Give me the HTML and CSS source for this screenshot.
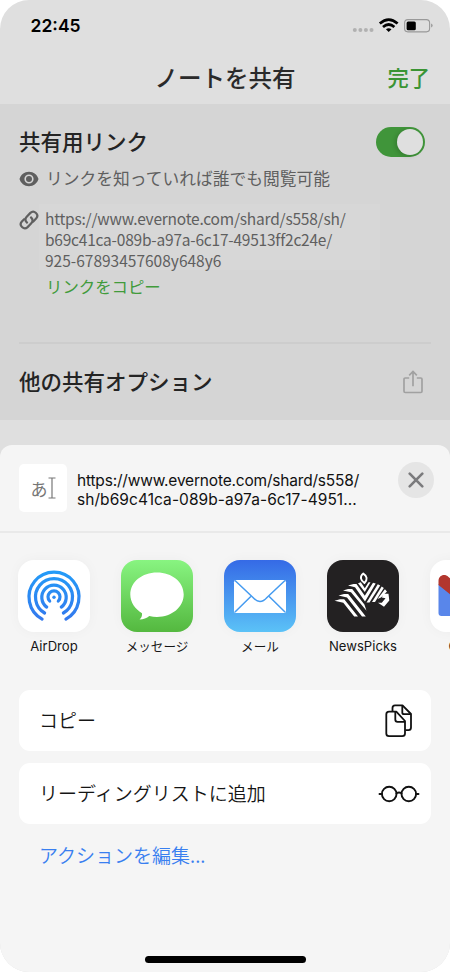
FILE: index.html
```html
<!DOCTYPE html>
<html lang="ja">
<head>
<meta charset="utf-8">
<title>ノートを共有</title>
<link rel="stylesheet" href="styles.css">
</head>
<body>
<div class="phone">
  <div class="status">
    <span class="time">22:45</span>
    <svg class="status-icons" width="82" height="20" viewBox="0 0 82 20">
      <g fill="#b1b1b1"><circle cx="3.8" cy="14" r="2"/><circle cx="9.4" cy="14" r="2"/><circle cx="14.9" cy="14" r="2"/><circle cx="20.5" cy="14" r="2"/></g>
      <g fill="none" stroke="#000" stroke-width="2.7"><path d="M28.800 7.500Q37.700-.3 46.600 7.500"/><path d="M32 11Q37.700 6 43.400 11"/></g>
      <path d="M34.900 13.300Q37.700 11 40.500 13.300L37.700 16z"/>
      <rect x="53.600" y="3.6" width="25" height="12.3" rx="3.3" fill="none" stroke="#999" stroke-width="1.1"/>
      <rect x="55.600" y="5.5" width="9.2" height="8.7" rx="1.5"/>
      <path d="M80.100 7.600q1.500.6 1.500 2t-1.500 2z" fill="#999"/>
    </svg>
  </div>
  <header class="nav"><h1>ノートを共有</h1><span class="done">完了</span></header>
  <main class="panel">
    <div class="row link-title"><h2>共有用リンク</h2><span class="toggle"><i></i></span></div>
    <div class="row viewers">
      <svg width="20" height="16" viewBox="0 0 20 16"><path fill="#5f5f5f" fill-rule="evenodd" d="M10 .8C5.300.8 1.800 3.800.5 8 1.800 12.200 5.300 15.200 10 15.200S18.200 12.200 19.500 8C18.200 3.800 14.700.8 10 .8zM10 3.400A4.600 4.600 0 1 1 10 12.600 4.600 4.600 0 0 1 10 3.400z"/><circle cx="10" cy="8" r="3" fill="#5f5f5f"/></svg>
      <span>リンクを知っていれば誰でも閲覧可能</span>
    </div>
    <div class="link">
      <svg class="chain" width="20" height="20" viewBox="0 0 20 20" fill="none" stroke="#606060" stroke-width="2.200" stroke-linecap="round"><path d="M8 12.600C5.900 10.600 6.300 8.200 7.700 6.700L11.400 2.900C15-.6 20.700 4.600 17.100 8.600L14.300 11.500"/><path d="M12 7.400C14.100 9.400 13.700 11.800 12.300 13.300L8.600 17.100C5 20.600-.7 15.400 2.900 11.400L5.100 9.200"/></svg>
      <p class="url"><span class="l1">https://www.evernote.com/shard/s558/sh/</span><span class="l2">b69c41ca-089b-a97a-6c17-49513ff2c24e/</span><span class="l3">925-67893457608y648y6</span></p>
    </div>
    <div class="copy-link">リンクをコピー</div>
    <div class="row other"><h2>他の共有オプション</h2>
      <svg width="20" height="24" viewBox="0 0 20 24" fill="none" stroke="#a1a1a1" stroke-width="1.700"><path d="M6.200 8H2.200Q1 8 1 9.200V21.300Q1 22.500 2.200 22.500H17.800Q19 22.500 19 21.300V9.200Q19 8 17.800 8H13.800M10 16.300V1.900M6.200 5.300L10 1.500L13.800 5.300"/></svg>
    </div>
  </main>
  <section class="sheet">
    <div class="sheet-head">
      <div class="thumb"><span>あ</span><svg width="8" height="22" viewBox="0 0 8 22" fill="none" stroke="#777" stroke-width="1.200"><path d="M.5 1H7.500M4 1V21M.5 21H7.500"/></svg></div>
      <p class="preview"><span class="p1">https://www.evernote.com/shard/s558/</span><span class="p2">sh/b69c41ca-089b-a97a-6c17-4951...</span></p>
      <div class="close"><svg width="16" height="16" viewBox="0 0 16 16"><path d="M1.700 1.700L14.300 14.300M14.300 1.700L1.700 14.300" stroke="#7b7b7d" stroke-width="2.600" stroke-linecap="round"/></svg></div>
    </div>
    <div class="apps">
      <div class="app"><div class="tile white">
        <svg viewBox="0 0 72 72"><defs><linearGradient id="air" gradientUnits="userSpaceOnUse" x1="0" y1="10" x2="0" y2="61"><stop offset="0" stop-color="#239cf8"/><stop offset="1" stop-color="#3478ed"/></linearGradient></defs>
        <g fill="none" stroke="url(#air)" stroke-width="3.200" stroke-linecap="round"><path d="M24.100 59.100A25 25 0 1 1 47.900 59.100"/><path d="M26.600 53A18.500 18.500 0 1 1 45.400 53"/><path d="M28.700 47.100A12.200 12.200 0 1 1 43.300 47.100"/><path d="M31.700 41A6 6 0 1 1 40.300 41"/></g><circle cx="36" cy="37.300" r="1.700" fill="#2b8cf4"/></svg>
      </div><span class="air-label">AirDrop</span></div>
      <div class="app"><div class="tile green"><svg viewBox="0 0 72 72"><path fill="#fff" d="M36 12.500C21 12.500 9.300 22 9.300 34.500C9.300 42.200 14 49 21 53.200C21.300 56 20.200 58 18.600 59.600C22.500 59.500 25.700 58 28.300 56C31 56.600 33.400 56.900 36 56.900C51 56.900 62.700 47 62.700 34.500S51 12.500 36 12.500z"/></svg></div><span>メッセージ</span></div>
      <div class="app"><div class="tile blue"><svg viewBox="0 0 72 72"><rect x="10" y="20" width="52" height="33" rx="2.300" fill="#fff"/><g fill="none" stroke="#459bf0" stroke-width="1.500"><path d="M11 20.500L29 37.500Q36 45.500 43 37.500L61 20.500M11 52L26.800 36.500M61 52L45.200 36.500"/></g></svg></div><span>メール</span></div>
      <div class="app"><div class="tile black"><svg viewBox="0 0 72 72">
        <g fill="#fff">
          <path d="M7.500 40.800L13 39.200H17.200L31 56.600H27.200L16.300 42.800z"/>
          <path d="M11.500 35.600L17 34H21.200L38.800 56.600H35L20 37.400z"/>
          <path d="M16 30.500L21 28.900H25.200L37.400 44.500L39.500 50.800L24 32.200z"/>
          <path d="M21 25.500L26.500 23.900H29.500L37.800 35.800L46 22.800L48.700 23.600L38 41.600L28 27.300z"/>
          <path d="M31 23.200L33.800 22.200L37.800 28.200L41.500 22.200H43.500L37.800 32z"/>
          <path d="M39.500 42.500L50.800 24.200L53.200 25.400L42.500 42.500z"/>
          <path d="M45 42L54.700 26.600L56.800 28.100L48 42z"/>
          <path d="M50.500 39L57.900 29.200L60 31.400L54 37.500z"/>
          <path d="M56.500 33.800H61.500L62.300 40.500L57 46.800L51 42.700L54.800 42.800L58.500 38.300L54.800 37.400z"/>
        </g>
        <path d="M36.300 13.600C32.500 16.500 33.500 20.500 37.400 23C41 19.500 40 16 36.300 13.600z" fill="#232122" stroke="#fff" stroke-width="1.900"/>
      </svg></div><span class="news-label">NewsPicks</span></div>
      <div class="app"><div class="tile white"><svg viewBox="0 0 72 72"><path d="M8.500 24V53Q8.500 56 11.500 56H21V33z" fill="#5986ea"/><path d="M8.500 25V21C8.500 15.500 14.500 13 18.500 17L36 33L53.500 17Q62 12 63.500 21V25L36 47z" fill="#b2362e"/></svg></div><span class="news-label">Gmail</span></div>
    </div>
    <div class="actions">
      <div class="action"><span>コピー</span><svg width="28" height="34" viewBox="0 0 28 34" fill="none" stroke="#111" stroke-width="1.800" stroke-linejoin="round"><path d="M7.500 7V4Q7.500 1.300 10 1.300H17.500L26 10V23.500Q26 26.200 23.500 26.200H20.500"/><path d="M17.300 1.300V8.500Q17.300 10.200 19 10.200H26"/><path d="M4 7.700H11.300L20 17V29.500Q20 32.200 17.300 32.200H4Q1.300 32.200 1.300 29.500V10.400Q1.300 7.700 4 7.700z"/><path d="M10.300 8V15.500Q10.300 17.800 12.500 17.800H20"/></svg></div>
      <div class="action"><span>リーディングリストに追加</span><svg class="glasses" width="42" height="18" viewBox="0 0 42 18" fill="none" stroke="#111" stroke-width="1.900"><circle cx="11.200" cy="9" r="7.300"/><circle cx="30.800" cy="9" r="7.300"/><path d="M1.500 9H4M38 9H40.500M18.400 8.300Q21 6.700 23.600 8.300" stroke-linecap="round"/></svg></div>
      <div class="edit">アクションを編集...</div>
    </div>
    <div class="home"></div>
  </section>
</div>
</body>
</html>
```
FILE: styles.css
```css
* { box-sizing: border-box; }
body { margin: 0; background: #fff; font-family: "Noto Sans CJK JP", sans-serif; }
h1, h2 { margin: 0; font-weight: 500; }
p { margin: 0; }
svg { display: block; flex: none; }
.phone { width: 450px; height: 972px; overflow: hidden; border-radius: 29px; background: #dfdfdf; display: flex; flex-direction: column; white-space: nowrap; }
.status { height: 52px; padding: 0 17px 0 30.5px; display: flex; justify-content: space-between; align-items: center; flex: none; }
.time { font: 600 17.5px/20px Inter, sans-serif; }
.nav { height: 52px; flex: none; display: grid; grid-template-columns: 1fr auto 1fr; align-items: center; padding: 0 20px 2px; line-height: 50px; }
.nav h1 { grid-column: 2; font-size: 23.5px; font-weight: 500; color: #2a2a2a; }
.done { justify-self: end; font-size: 21.3px; font-weight: 500; color: #3a9434; }
.panel { height: 316px; flex: none; background: #d5d5d5; padding: 22px 19px 0; color: #5f5f5f; }
.row { display: flex; align-items: center; }
.row h2 { font-size: 21.5px; line-height: 28px; padding-bottom: 1px; color: #242424; }
.link-title { justify-content: space-between; height: 31px; padding-right: 6px; }
.toggle { width: 49px; height: 30px; border-radius: 15px; background: #40953a; padding: 2px; display: flex; justify-content: flex-end; }
.toggle i { width: 26px; height: 26px; border-radius: 50%; background: #dfdfdf; box-shadow: -2px 1px 4px rgba(0,0,0,.16); }
.viewers { gap: 7px; height: 28px; margin-top: 8px; font-size: 16.75px; }
.viewers span { padding-bottom: 3px; }
.link { display: flex; margin-top: 11px; height: 66px; }
.chain { margin-top: 6px; }
.url { width: 341px; background: #d7d7d7; padding: 4px 0 0 6px; font-size: 15.5px; line-height: 21px; }
.url span, .preview span { display: block; }
.l1 { letter-spacing: -.22px; }
.l2 { letter-spacing: -.22px; }
.copy-link { margin-left: 27px; height: 73px; line-height: 32px; font-size: 16.4px; color: #419b3b; }
.other { border-top: 2px solid #cdcdcd; height: 77px; justify-content: space-between; padding-right: 8px; margin-top: -1px; }
.sheet { margin-top: 25px; flex: 1; background: #f5f5f5; border-radius: 12px 12px 0 0; display: flex; flex-direction: column; overflow: hidden; }
.sheet-head { height: 88px; flex: none; border-bottom: 2px solid #e9e9e9; padding: 19px 16px 0 19px; display: flex; }
.thumb { width: 48px; height: 48px; background: #fff; border-radius: 5px; display: flex; align-items: center; justify-content: center; color: #777; font-size: 17px; }
.preview { margin: 7px 0 0 10px; width: 290px; font: 400 15.5px/19px Inter, sans-serif; color: #111; }
.p1 { letter-spacing: -.19px; }
.p2 { letter-spacing: .06px; }
.close { margin-left: auto; margin-top: -2px; width: 36px; height: 36px; border-radius: 50%; background: #e5e5e5; display: flex; align-items: center; justify-content: center; }
.apps { height: 157px; flex: none; padding: 27px 0 0 18px; display: flex; gap: 31px; overflow: hidden; }
.app { width: 72px; flex: none; display: flex; flex-direction: column; align-items: center; font-size: 12.6px; line-height: 27px; color: #161616; }
.tile { width: 72px; height: 72px; border-radius: 16px; box-shadow: 0 0 13px rgba(0,0,0,.035); overflow: hidden; }
.white { background: #fff; }
.green { background: linear-gradient(#88f481, #54b83f); }
.blue { background: linear-gradient(#356ae6, #5bc2f7); }
.black { background: #232122; }
.air-label, .news-label { font-family: Inter, sans-serif; font-size: 13.1px; line-height: 29px; }
.actions { padding: 0 19px; display: flex; flex-direction: column; gap: 12px; }
.action { height: 61px; border-radius: 11px; background: #fff; padding: 0 18px 0 20px; display: flex; align-items: center; justify-content: space-between; color: #151515; font-size: 19px; font-weight: 350; }
.action span { padding-bottom: 2px; }
.action .glasses { margin-right: -7px; }
.edit { padding-left: 20px; margin-top: 3px; font-size: 19px; font-weight: 350; line-height: 32px; color: #397ff0; }
.home { width: 161px; height: 7px; border-radius: 4px; background: #000; margin: auto auto 9px; }
```
